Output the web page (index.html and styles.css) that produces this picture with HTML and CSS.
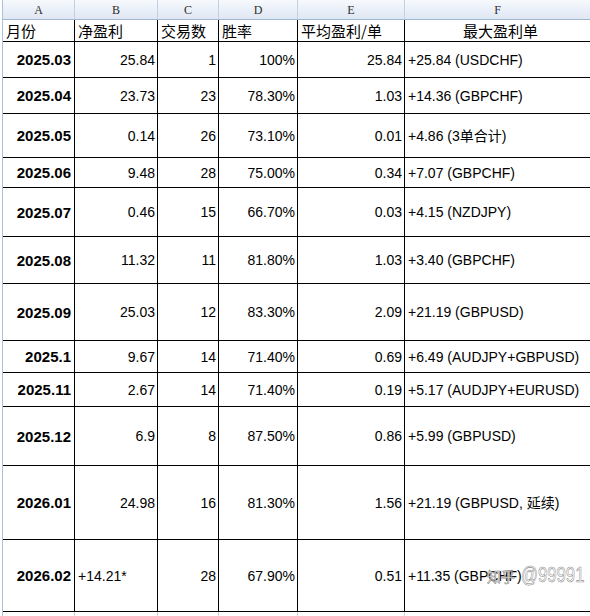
FILE: index.html
```html
<!DOCTYPE html>
<html lang="zh">
<head>
<meta charset="utf-8">
<title>月度盈利统计</title>
<link rel="stylesheet" href="styles.css">
</head>
<body>
<div class="sheet">
  <div class="col-head">A</div><div class="col-head">B</div><div class="col-head">C</div><div class="col-head">D</div><div class="col-head">E</div><div class="col-head last">F</div>

  <div class="cell title">月份</div><div class="cell title">净盈利</div><div class="cell title">交易数</div><div class="cell title">胜率</div><div class="cell title">平均盈利/单</div><div class="cell title center last">最大盈利单</div>

  <div class="cell month">2025.03</div><div class="cell num">25.84</div><div class="cell num">1</div><div class="cell num">100%</div><div class="cell num">25.84</div><div class="cell text last">+25.84 (USDCHF)</div>

  <div class="cell month">2025.04</div><div class="cell num">23.73</div><div class="cell num">23</div><div class="cell num">78.30%</div><div class="cell num">1.03</div><div class="cell text last">+14.36 (GBPCHF)</div>

  <div class="cell month">2025.05</div><div class="cell num">0.14</div><div class="cell num">26</div><div class="cell num">73.10%</div><div class="cell num">0.01</div><div class="cell text last">+4.86 (3单合计)</div>

  <div class="cell month">2025.06</div><div class="cell num">9.48</div><div class="cell num">28</div><div class="cell num">75.00%</div><div class="cell num">0.34</div><div class="cell text last">+7.07 (GBPCHF)</div>

  <div class="cell month">2025.07</div><div class="cell num">0.46</div><div class="cell num">15</div><div class="cell num">66.70%</div><div class="cell num">0.03</div><div class="cell text last">+4.15 (NZDJPY)</div>

  <div class="cell month">2025.08</div><div class="cell num">11.32</div><div class="cell num">11</div><div class="cell num">81.80%</div><div class="cell num">1.03</div><div class="cell text last">+3.40 (GBPCHF)</div>

  <div class="cell month">2025.09</div><div class="cell num">25.03</div><div class="cell num">12</div><div class="cell num">83.30%</div><div class="cell num">2.09</div><div class="cell text last">+21.19 (GBPUSD)</div>

  <div class="cell month">2025.1</div><div class="cell num">9.67</div><div class="cell num">14</div><div class="cell num">71.40%</div><div class="cell num">0.69</div><div class="cell text last">+6.49 (AUDJPY+GBPUSD)</div>

  <div class="cell month">2025.11</div><div class="cell num">2.67</div><div class="cell num">14</div><div class="cell num">71.40%</div><div class="cell num">0.19</div><div class="cell text last">+5.17 (AUDJPY+EURUSD)</div>

  <div class="cell month">2025.12</div><div class="cell num">6.9</div><div class="cell num">8</div><div class="cell num">87.50%</div><div class="cell num">0.86</div><div class="cell text last">+5.99 (GBPUSD)</div>

  <div class="cell month">2026.01</div><div class="cell num">24.98</div><div class="cell num">16</div><div class="cell num">81.30%</div><div class="cell num">1.56</div><div class="cell text last">+21.19 (GBPUSD, 延续)</div>

  <div class="cell month">2026.02</div><div class="cell text">+14.21*</div><div class="cell num">28</div><div class="cell num">67.90%</div><div class="cell num">0.51</div><div class="cell text last wm-host">+11.35 (GBPCHF)<span class="watermark"><span class="wm-logo">知乎</span><span class="wm-id">@99991</span></span></div>

  <div class="grid"></div><div class="grid"></div><div class="grid"></div><div class="grid"></div><div class="grid"></div><div class="grid last"></div>
</div>
</body>
</html>
```

FILE: styles.css
```css
* { box-sizing: border-box; }

html, body {
  margin: 0;
  padding: 0;
  background: #ffffff;
  overflow: hidden;
}

.sheet {
  margin-left: 2px;
  border-left: 1px solid #a9c0df;
  display: grid;
  grid-template-columns: 72px 83px 61px 79px 107px 1fr;
  grid-template-rows: 20px 22px 36px 36px 44px 30px 49px 47px 57px 32px 34px 59px 74px 72px 10px;
  font-family: "Liberation Sans", "Noto Sans CJK SC", sans-serif;
  font-size: 14px;
  color: #000;
}

.col-head {
  background: linear-gradient(#f7f9fd, #e9eff8 55%, #dfe7f3);
  border-right: 1px solid #c3d0e2;
  border-bottom: 1px solid #9eb6ce;
  font-family: "Liberation Serif", "DejaVu Serif", serif;
  font-size: 12px;
  color: #2e2e2e;
  display: flex;
  align-items: center;
  justify-content: center;
  padding-top: 1px;
}

.col-head.last { border-right: none; }

.cell {
  border-right: 1px solid #000;
  border-bottom: 1px solid #000;
  display: flex;
  align-items: center;
  white-space: nowrap;
  overflow: hidden;
  line-height: 1;
}

.cell.last { border-right: none; }

.title {
  font-family: "Noto Sans CJK SC", sans-serif;
  font-size: 15px;
  padding-left: 3px;
  padding-bottom: 1px;
}

.title.center { justify-content: center; padding-left: 6px; }

.month {
  justify-content: flex-end;
  font-weight: bold;
  font-size: 15px;
  padding-right: 3px;
}

.num {
  justify-content: flex-end;
  padding-right: 2px;
}

.text {
  padding-left: 3px;
}

.wm-host {
  position: relative;
}

.watermark {
  position: absolute;
  left: 82px;
  top: 24px;
  display: flex;
  align-items: baseline;
  line-height: 22px;
  color: rgba(255, 255, 255, 0.9);
  -webkit-text-stroke: 0.6px #8c8c8c;
}

.wm-logo {
  font-family: "Noto Sans CJK SC", sans-serif;
  font-size: 14px;
  margin-right: 6px;
}

.wm-id {
  display: inline-block;
  font-family: "Liberation Sans", sans-serif;
  font-size: 22px;
  transform: scaleX(0.76);
  transform-origin: left center;
}

.grid {
  border-right: 1px solid #d0d7e5;
}

.grid.last { border-right: none; }
```
